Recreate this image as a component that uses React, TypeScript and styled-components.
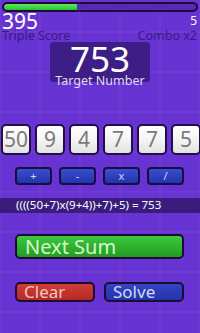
import styled, { createGlobalStyle } from "styled-components";

const GlobalStyle = createGlobalStyle`
  html, body {
    margin: 0;
    padding: 0;
    background: #6630cc;
  }
  * {
    box-sizing: border-box;
  }
`;

const numbers = ["50", "9", "4", "7", "7", "5"];
const operators = ["+", "-", "x", "/"];

const App = () => {
  const progress = 38;

  return (
    <>
      <GlobalStyle />
      <Screen>
        <ProgressTrack>
          <ProgressFill style={{ width: `${progress}%` }} />
        </ProgressTrack>

        <ScoreRow>
          <Column>
            <BigValue>395</BigValue>
            <Label>Triple Score</Label>
          </Column>
          <Column $right>
            <SmallValue>5</SmallValue>
            <Label>Combo x2</Label>
          </Column>
        </ScoreRow>

        <TargetBox>
          <TargetValue>753</TargetValue>
          <TargetLabel>Target Number</TargetLabel>
        </TargetBox>

        <NumberRow>
          {numbers.map((n, i) => (
            <NumberTile key={i}>{n}</NumberTile>
          ))}
        </NumberRow>

        <OperatorRow>
          {operators.map((op) => (
            <OperatorButton key={op}>{op}</OperatorButton>
          ))}
        </OperatorRow>

        <EquationBar>((((50+7)x(9+4))+7)+5) = 753</EquationBar>

        <NextButton>Next Sum</NextButton>

        <ActionRow>
          <ActionButton $variant="red">Clear</ActionButton>
          <ActionButton $variant="blue">Solve</ActionButton>
        </ActionRow>
      </Screen>
    </>
  );
};

export default App;

const Screen = styled.div`
  width: 200px;
  height: 333px;
  overflow: hidden;
  font-family: "Noto Sans", "Open Sans", sans-serif;
  background-color: #6630cc;
  background-image: linear-gradient(
      90deg,
      rgba(130, 70, 210, 0.3) 0,
      rgba(130, 70, 210, 0.3) 2px,
      transparent 2px
    ),
    linear-gradient(
      0deg,
      rgba(130, 70, 210, 0.3) 0,
      rgba(130, 70, 210, 0.3) 2px,
      transparent 2px
    ),
    linear-gradient(#6733d2, #6733d2);
  background-size: 40px 40px, 40px 40px, 100% 100%;
  background-position: -1px 0, 0 -7px, 0 0;
  display: flex;
  flex-direction: column;
`;

const ProgressTrack = styled.div`
  margin: 2px 2px 0;
  height: 10px;
  border: 2px solid #1c0b3c;
  border-radius: 6px;
  background: #5a29b4;
  overflow: hidden;
`;

const ProgressFill = styled.div`
  height: 100%;
  background: linear-gradient(#5cea5c, #2fc02f);
  border-radius: 4px 0 0 4px;
`;

const ScoreRow = styled.div`
  display: flex;
  justify-content: space-between;
  padding: 0 3px 0 2px;
`;

const Column = styled.div<{ $right?: boolean }>`
  display: flex;
  flex-direction: column;
  align-items: ${({ $right }) => ($right ? "flex-end" : "flex-start")};
`;

const BigValue = styled.div`
  font-size: 21px;
  line-height: 18px;
  height: 16px;
  color: #ffffff;
`;

const SmallValue = styled.div`
  font-size: 12px;
  line-height: 14px;
  height: 16px;
  padding-top: 2px;
  color: #ffffff;
`;

const Label = styled.div`
  font-size: 12.5px;
  line-height: 14px;
  padding-top: 1px;
  color: #3a1a7e;
`;

const TargetBox = styled.div`
  width: 100px;
  height: 40px;
  margin: -1px auto 0;
  background: #3d1e86;
  border-radius: 4px;
  display: flex;
  flex-direction: column;
  align-items: center;
`;

const TargetValue = styled.div`
  font-size: 35px;
  line-height: 30px;
  padding-top: 2px;
  color: #ffffff;
`;

const TargetLabel = styled.div`
  font-size: 12.5px;
  line-height: 14px;
  color: #e4dcf2;
  white-space: nowrap;
`;

const NumberRow = styled.div`
  display: flex;
  gap: 4px;
  margin-top: 42px;
  padding-left: 1px;
`;

const NumberTile = styled.div`
  flex: 0 0 30px;
  height: 31px;
  border: 2px solid #230f45;
  border-radius: 5px;
  background: linear-gradient(#ffffff 0%, #f4f4f4 50%, #e2e2e2 100%);
  color: #7a7a7a;
  font-size: 21px;
  line-height: 27px;
  text-align: center;
`;

const OperatorRow = styled.div`
  display: flex;
  gap: 7px;
  padding-left: 15px;
  margin-top: 12px;
`;

const OperatorButton = styled.div`
  width: 37px;
  height: 18px;
  border: 2px solid #1a0d40;
  border-radius: 4px;
  background: linear-gradient(#3a4ed0, #2234ac);
  color: #cfd6ff;
  font-size: 11px;
  line-height: 14px;
  text-align: center;
`;

const EquationBar = styled.div`
  margin-top: 13px;
  height: 15px;
  background: #3a1c7c;
  color: #ffffff;
  font-size: 11.5px;
  line-height: 14px;
  padding-left: 16px;
  white-space: nowrap;
`;

const NextButton = styled.div`
  margin: 21px 16px 0 15px;
  height: 25px;
  border: 2px solid #1a0c33;
  border-radius: 5px;
  background: linear-gradient(#3fc73f 0%, #2db02d 55%, #259a25 100%);
  color: #d8f5d0;
  font-size: 20px;
  line-height: 21px;
  padding-left: 8px;
`;

const ActionRow = styled.div`
  display: flex;
  justify-content: space-between;
  margin: 23px 16px 0 15px;
`;

const ActionButton = styled.div<{ $variant: "red" | "blue" }>`
  width: 80px;
  height: 20px;
  border: 2px solid #1a0c33;
  border-radius: 5px;
  background: ${({ $variant }) =>
    $variant === "red"
      ? "linear-gradient(#d23c36, #b42a26)"
      : "linear-gradient(#3444c4, #2434a8)"};
  color: ${({ $variant }) => ($variant === "red" ? "#f0c8c4" : "#d4daf8")};
  font-size: 17px;
  line-height: 16px;
  padding-left: 7px;
`;
